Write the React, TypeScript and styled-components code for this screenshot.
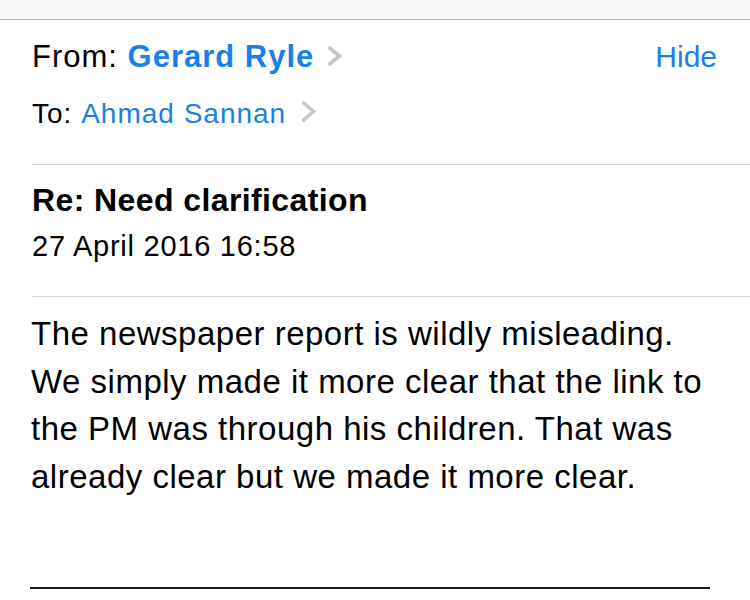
import React from "react";
import styled, { createGlobalStyle } from "styled-components";

const GlobalStyle = createGlobalStyle`
  html, body {
    margin: 0;
    padding: 0;
    background: #ffffff;
  }
  body {
    font-family: "Liberation Sans", Arial, Helvetica, sans-serif;
    color: #000000;
    -webkit-font-smoothing: antialiased;
  }
`;

const Page = styled.div`
  width: 750px;
  height: 600px;
  overflow: hidden;
  background: #ffffff;
  display: flex;
  flex-direction: column;
`;

const TopBar = styled.div`
  height: 19px;
  background: #f7f7f8;
  border-bottom: 1px solid #b1b1b1;
  flex: none;
`;

const Section = styled.div<{ $top: number; $bottom: number }>`
  margin-left: 32px;
  padding: ${(p) => p.$top}px 33px ${(p) => p.$bottom}px 0;
  border-bottom: 1px solid #d3d3d6;
  display: flex;
  flex-direction: column;
`;

const AddressRow = styled.div<{ $size: number; $gap?: number }>`
  display: flex;
  align-items: baseline;
  font-size: ${(p) => p.$size}px;
  line-height: 40px;
  letter-spacing: 1px;
  margin-top: ${(p) => p.$gap ?? 0}px;
  white-space: nowrap;
`;

const Label = styled.span`
  color: #000000;
`;

const Contact = styled.span<{ $bold?: boolean }>`
  color: #1a7fe6;
  font-weight: ${(p) => (p.$bold ? 700 : 400)};
`;

const Spacer = styled.span`
  flex: 1;
`;

const HideButton = styled.span`
  color: #1a7fe6;
  font-size: 30px;
  letter-spacing: 0;
`;

const ChevronSvg = styled.svg<{ $offset: number }>`
  margin-left: ${(p) => p.$offset}px;
  flex: none;
`;

const Chevron: React.FC<{ w: number; h: number; offset: number }> = ({ w, h, offset }) => (
  <ChevronSvg $offset={offset} width={w} height={h} viewBox={`0 0 ${w} ${h}`}>
    <polyline
      points={`2.5,2 ${w - 2.5},${h / 2} 2.5,${h - 2}`}
      fill="none"
      stroke="#c5c5ca"
      strokeWidth={3.6}
      strokeLinecap="butt"
      strokeLinejoin="miter"
    />
  </ChevronSvg>
);

const Subject = styled.div`
  font-size: 32px;
  font-weight: 700;
  line-height: 40px;
  letter-spacing: 0.4px;
`;

const DateLine = styled.div`
  font-size: 29px;
  line-height: 40px;
  letter-spacing: 0.75px;
  margin-top: 6px;
`;

const Body = styled.div`
  padding: 13px 28px 0 31px;
  display: flex;
  flex-direction: column;
`;

const Message = styled.p`
  margin: 0;
  font-size: 33px;
  line-height: 47.5px;
  letter-spacing: 0.5px;
  color: #000000;
`;

const Rule = styled.div`
  margin-top: 87px;
  margin-left: -1px;
  width: 680px;
  height: 2px;
  background: #1c1c1c;
`;

export default function App() {
  return (
    <>
      <GlobalStyle />
      <Page>
        <TopBar />
        <Section $top={17} $bottom={30}>
          <AddressRow $size={31}>
            <Label>From:&nbsp;</Label>
            <Contact $bold>Gerard Ryle</Contact>
            <Chevron w={16} h={22} offset={12} />
            <Spacer />
            <HideButton>Hide</HideButton>
          </AddressRow>
          <AddressRow $size={28} $gap={17}>
            <Label>To:&nbsp;</Label>
            <Contact>Ahmad Sannan</Contact>
            <Chevron w={16} h={23} offset={14} />
          </AddressRow>
        </Section>
        <Section $top={15} $bottom={30}>
          <Subject>Re: Need clarification</Subject>
          <DateLine>27 April 2016 16:58</DateLine>
        </Section>
        <Body>
          <Message>
            The newspaper report is wildly misleading. We simply made it more clear that the link to the PM was
            through his children. That was already clear but we made it more clear.
          </Message>
          <Rule />
        </Body>
      </Page>
    </>
  );
}
